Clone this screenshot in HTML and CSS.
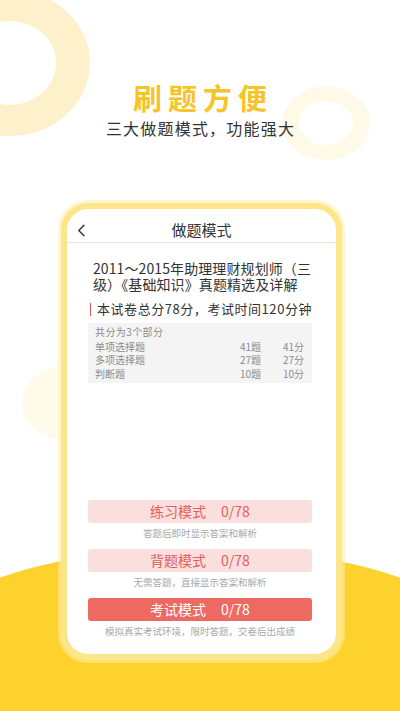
FILE: index.html
```html
<!DOCTYPE html>
<html lang="zh-CN">
<head>
<meta charset="utf-8">
<title>刷题方便</title>
<link rel="stylesheet" href="styles.css">
</head>
<body>
<div class="page">
  <div class="deco ring-tl"></div>
  <div class="deco ring-r"></div>
  <div class="deco dot-l"></div>
  <div class="deco blob"></div>

  <header class="hero">
    <h1 class="hero-title">刷题方便</h1>
    <p class="hero-sub">三大做题模式，功能强大</p>
  </header>

  <div class="phone">
    <div class="nav">
      <span class="nav-back">
        <svg width="9" height="13" viewBox="0 0 9 13"><path d="M7 1.2 L1.8 6.5 L7 11.8" fill="none" stroke="#333" stroke-width="1.4" stroke-linecap="round" stroke-linejoin="round"/></svg>
      </span>
      <span class="nav-title">做题模式</span>
      <span></span>
    </div>
    <div class="content">
      <div class="paper-title">2011～2015年助理理财规划师（三<br>级）《基础知识》真题精选及详解</div>
      <div class="score-line"><span class="score-bar"></span><span>本试卷总分78分，考试时间120分钟</span></div>
      <div class="parts">
        <div class="parts-head">共分为3个部分</div>
        <div class="part-row"><span class="part-name">单项选择题</span><span class="part-count">41题</span><span class="part-score">41分</span></div>
        <div class="part-row"><span class="part-name">多项选择题</span><span class="part-count">27题</span><span class="part-score">27分</span></div>
        <div class="part-row"><span class="part-name">判断题</span><span class="part-count">10题</span><span class="part-score">10分</span></div>
      </div>

      <div class="modes">
        <div class="mode-btn soft"><span>练习模式</span><span>0/78</span></div>
        <div class="mode-sub">答题后即时显示答案和解析</div>
        <div class="mode-btn soft"><span>背题模式</span><span>0/78</span></div>
        <div class="mode-sub">无需答题，直接显示答案和解析</div>
        <div class="mode-btn solid"><span>考试模式</span><span>0/78</span></div>
        <div class="mode-sub last">模拟真实考试环境，限时答题，交卷后出成绩</div>
      </div>
    </div>
  </div>
</div>
</body>
</html>
```

FILE: styles.css
```css
html, body {
  margin: 0;
  padding: 0;
}
body {
  width: 400px;
  height: 711px;
  overflow: hidden;
  background: #ffffff;
  font-family: "Noto Sans CJK SC", "Noto Sans", sans-serif;
  color: #333;
}
.page {
  position: relative;
  width: 400px;
  height: 711px;
  overflow: hidden;
}

/* decorations */
.deco {
  position: absolute;
  border-radius: 50%;
  box-sizing: border-box;
}
.ring-tl {
  left: -70px;
  top: -10px;
  width: 160px;
  height: 146px;
  border-style: solid;
  border-color: #fdf1cc;
  border-width: 31px 34px;
}
.ring-r {
  left: 282px;
  top: 86px;
  width: 88px;
  height: 74px;
  border-style: solid;
  border-color: #fffae8;
  border-width: 15px 17px;
}
.dot-l {
  left: 22px;
  top: 366px;
  width: 88px;
  height: 74px;
  background: #fffbea;
}
.blob {
  left: -150px;
  top: 547px;
  width: 700px;
  height: 340px;
  background: #fed22d;
}

/* hero */
.hero {
  position: relative;
  padding-top: 79px;
  text-align: center;
}
.hero-title {
  margin: 0;
  font-size: 29px;
  line-height: 36px;
  font-weight: 700;
  letter-spacing: 6px;
  text-indent: 6px;
  color: #f6c428;
}
.hero-sub {
  margin: 3px 0 0;
  font-size: 16px;
  line-height: 20px;
  letter-spacing: 1.2px;
  text-indent: 1px;
  color: #333;
}

/* phone frame */
.phone {
  position: relative;
  z-index: 1;
  margin: 65px 0 0 61px;
  width: 281px;
  height: 457px;
  box-sizing: border-box;
  border: 6px solid #fde58a;
  border-radius: 27px;
  background: #fff;
  box-shadow: 0 0 0 3px rgba(255, 238, 170, 0.55);
  display: flex;
  flex-direction: column;
}
.nav {
  display: grid;
  grid-template-columns: 1fr auto 1fr;
  align-items: center;
  padding: 11px 0 2px;
  border-bottom: 1px solid #f3e1e1;
}
.nav-back {
  padding-left: 10px;
  display: flex;
  align-items: center;
  height: 20px;
}
.nav-title {
  font-size: 15px;
  line-height: 20px;
  color: #333;
}
.content {
  flex: 1;
  display: flex;
  flex-direction: column;
  padding: 17px 24px 17px 21px;
}
.paper-title {
  padding-left: 5px;
  font-size: 14px;
  line-height: 16px;
  letter-spacing: 0.1px;
  white-space: nowrap;
  color: #333;
}
.score-line {
  margin-top: 9px;
  padding-left: 2px;
  display: flex;
  align-items: center;
  gap: 6px;
  font-size: 13px;
  line-height: 16px;
  letter-spacing: 0.55px;
  white-space: nowrap;
  color: #333;
}
.score-bar {
  width: 2px;
  height: 13px;
  background: #e25555;
}
.parts {
  margin-top: 6px;
  background: #f4f4f4;
  padding: 2px 8px 3px 7px;
  font-size: 10px;
  line-height: 13.5px;
  color: #8c8c8c;
}
.parts-head {
  margin-bottom: 1px;
  letter-spacing: 0.4px;
}
.part-row {
  display: flex;
}
.part-name {
  flex: 1;
}
.part-count {
  width: 40px;
  text-align: right;
}
.part-score {
  width: 43px;
  text-align: right;
}

.modes {
  margin-top: auto;
  display: flex;
  flex-direction: column;
}
.mode-btn {
  height: 23px;
  border-radius: 3px;
  display: flex;
  align-items: center;
  justify-content: center;
  gap: 15px;
  font-size: 14px;
  line-height: 23px;
}
.mode-btn.soft {
  background: #fbdfdf;
  color: #e0605a;
}
.mode-btn.solid {
  background: #ec6a61;
  color: #ffffff;
}
.mode-sub {
  margin: 4px 0 10px;
  text-align: center;
  font-size: 9.5px;
  line-height: 12px;
  color: #a8a8a8;
  white-space: nowrap;
}
.mode-sub.last {
  margin-bottom: 0;
}
```
